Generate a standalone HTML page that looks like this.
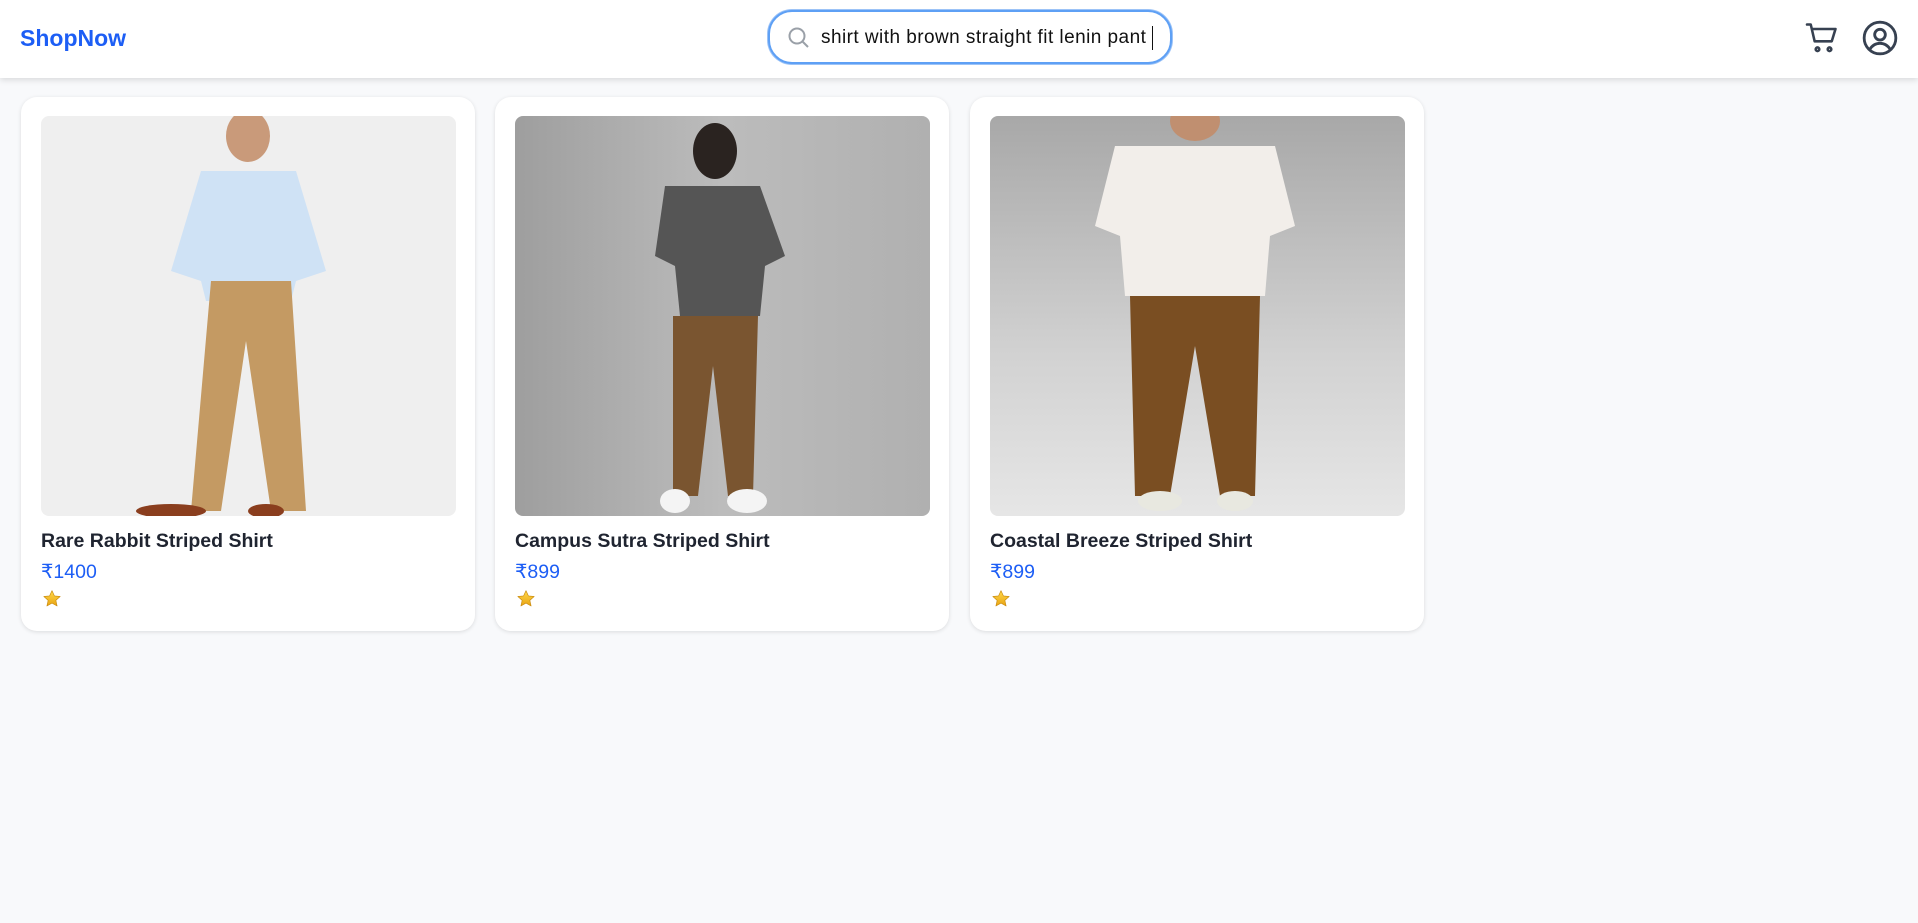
<!DOCTYPE html>
<html><head><meta charset="utf-8"><style>
*{margin:0;padding:0;box-sizing:border-box}
body{width:1918px;height:923px;background:#f8f9fb;font-family:"Liberation Sans","DejaVu Sans",sans-serif;overflow:hidden;position:relative}
.hdr{position:absolute;left:0;top:0;width:1918px;height:78px;background:#fff;box-shadow:0 2px 6px rgba(0,0,0,.13)}
.logo{position:absolute;left:20px;top:25px;font-size:23px;font-weight:bold;color:#1d5ef5}
.search{position:absolute;left:768px;top:10px;width:404px;height:54px;border:2px solid #5ea0f5;border-radius:24px;background:#fff;box-shadow:0 0 0 1px #9cc3f7}
.search span{position:absolute;left:51px;top:15px;font-size:19px;color:#111;letter-spacing:0.45px}
.search i{position:absolute;left:382px;top:14px;width:1px;height:24px;background:#111}
.card{position:absolute;top:97px;width:454px;height:534px;background:#fff;border-radius:16px;box-shadow:0 1px 4px rgba(0,0,0,.12)}
.img{position:absolute;left:20px;top:19px;width:415px;height:400px;border-radius:8px;overflow:hidden}
.t{position:absolute;left:20px;top:433px;font-size:19.5px;color:#1f2430;font-weight:600}
.p{position:absolute;left:20px;top:463px;font-size:19.5px;color:#1d5ef5}
.s{position:absolute;left:21px;top:492px}
</style></head><body>
<div class="hdr">
<div class="logo">ShopNow</div>
<div class="search">
<svg style="position:absolute;left:17px;top:14px" width="24" height="24" viewBox="0 0 24 24" fill="none" stroke="#9aa0a8" stroke-width="2"><circle cx="10" cy="10" r="7.5"/><path d="M15.5 15.5L21 21"/></svg>
<span>shirt with brown straight fit lenin pant</span><i></i></div>
<svg style="position:absolute;left:1804px;top:20px" width="36" height="36" viewBox="0 0 24 24" fill="none" stroke="#374151" stroke-width="1.7" stroke-linecap="round" stroke-linejoin="round"><path d="M2 3h2.5l2.6 11.2h11.4L21 6H6"/><circle cx="9" cy="19.5" r="1.2"/><circle cx="17" cy="19.5" r="1.2"/></svg>
<svg style="position:absolute;left:1860px;top:18px" width="40" height="40" viewBox="0 0 24 24" fill="none" stroke="#374151" stroke-width="1.7"><circle cx="12" cy="12" r="9.5"/><circle cx="12" cy="10" r="3.2"/><path d="M5.8 19c1.5-2.6 3.6-3.8 6.2-3.8s4.7 1.2 6.2 3.8"/></svg>
</div>

<div class="card" style="left:21px">
<div class="img" style="background:#efefef">
<svg width="415" height="400" viewBox="0 0 415 400"><ellipse cx="207" cy="20" rx="22" ry="26" fill="#c99a7a"/><path d="M160 55h95l30 100-30 10-5 20h-85l-5-20-30-10z" fill="#cfe2f5"/><path d="M170 165h80l15 230h-35l-25-170-25 170h-30z" fill="#c49a63"/><ellipse cx="130" cy="395" rx="35" ry="7" fill="#8a3e1e"/><ellipse cx="225" cy="395" rx="18" ry="7" fill="#8a3e1e"/></svg>
</div>
<div class="t">Rare Rabbit Striped Shirt</div><div class="p">₹1400</div>
<svg class="s" width="20" height="20" viewBox="0 0 24 24"><defs><linearGradient id="g" x1="0" y1="0" x2="0" y2="1"><stop offset="0" stop-color="#ffd84a"/><stop offset="1" stop-color="#e9a412"/></linearGradient></defs><path d="M12 2l2.9 6.3 6.9.7-5.2 4.6 1.5 6.8L12 16.9 5.9 20.4l1.5-6.8L2.2 9l6.9-.7z" fill="url(#g)" stroke="#c98b10" stroke-width=".8" stroke-linejoin="round"/></svg></div>

<div class="card" style="left:495px">
<div class="img" style="background:linear-gradient(90deg,#9e9e9e,#bcbcbc 50%,#b0b0b0)">
<svg width="415" height="400" viewBox="0 0 415 400"><ellipse cx="200" cy="35" rx="22" ry="28" fill="#2a2320"/><path d="M150 70h95l25 70-20 10-5 50h-80l-5-50-20-10z" fill="#555"/><path d="M158 200h85l-5 180h-25l-15-130-15 130h-25z" fill="#7a5530"/><ellipse cx="160" cy="385" rx="15" ry="12" fill="#f4f4f4"/><ellipse cx="232" cy="385" rx="20" ry="12" fill="#f4f4f4"/></svg>
</div>
<div class="t">Campus Sutra Striped Shirt</div><div class="p">₹899</div>
<svg class="s" width="20" height="20" viewBox="0 0 24 24"><path d="M12 2l2.9 6.3 6.9.7-5.2 4.6 1.5 6.8L12 16.9 5.9 20.4l1.5-6.8L2.2 9l6.9-.7z" fill="url(#g)" stroke="#c98b10" stroke-width=".8" stroke-linejoin="round"/></svg></div>

<div class="card" style="left:970px">
<div class="img" style="background:linear-gradient(180deg,#a8a8a8,#d2d2d2 60%,#e6e6e6)">
<svg width="415" height="400" viewBox="0 0 415 400"><ellipse cx="205" cy="5" rx="25" ry="20" fill="#c08f70"/><path d="M125 30h160l20 80-25 10-5 60h-140l-5-60-25-10z" fill="#f2eeea"/><path d="M140 180h130l-5 200h-35l-25-150-25 150h-35z" fill="#7a4e22"/><ellipse cx="170" cy="385" rx="22" ry="10" fill="#e8e8e0"/><ellipse cx="245" cy="385" rx="18" ry="10" fill="#e8e8e0"/></svg>
</div>
<div class="t">Coastal Breeze Striped Shirt</div><div class="p">₹899</div>
<svg class="s" width="20" height="20" viewBox="0 0 24 24"><path d="M12 2l2.9 6.3 6.9.7-5.2 4.6 1.5 6.8L12 16.9 5.9 20.4l1.5-6.8L2.2 9l6.9-.7z" fill="url(#g)" stroke="#c98b10" stroke-width=".8" stroke-linejoin="round"/></svg></div>
</body></html>
